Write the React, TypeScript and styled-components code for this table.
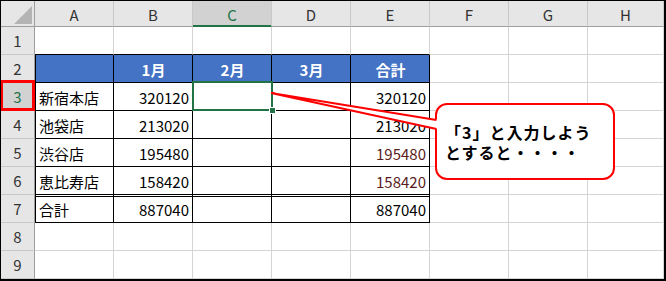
import React from 'react';
import styled, { createGlobalStyle, css } from 'styled-components';

const GlobalStyle = createGlobalStyle`
  html, body { margin: 0; padding: 0; background: #fff; }
  body { font-family: "Noto Sans CJK JP", "Noto Sans", sans-serif; }
`;

const FONT = `"Noto Sans CJK JP", "Noto Sans", sans-serif`;
const GREEN = '#217346';

const Frame = styled.div`
  position: relative;
  width: 666px;
  height: 281px;
  box-sizing: border-box;
  border-style: solid;
  border-color: #000;
  border-width: 1px 2px 2px 1px;
  overflow: hidden;
  background: #fff;
`;

const Sheet = styled.div`
  display: grid;
  grid-template-columns: 34px repeat(7, 79px) 76px;
  grid-template-rows: 26px repeat(9, 28px);
  font-family: ${FONT};
  font-size: 15px;
  color: #000;
`;

const Corner = styled.div`
  position: relative;
  box-sizing: border-box;
  background: #e6e6e6;
  border-right: 1px solid #9e9e9e;
  border-bottom: 1px solid #9e9e9e;

  &::after {
    content: '';
    position: absolute;
    right: 2px;
    bottom: 2px;
    width: 18px;
    height: 18px;
    background: #b4b4b4;
    clip-path: polygon(100% 0, 100% 100%, 0 100%);
  }
`;

const ColHeader = styled.div<{ $active?: boolean }>`
  box-sizing: border-box;
  display: flex;
  align-items: center;
  justify-content: center;
  background: ${(p) => (p.$active ? '#d2d2d2' : '#e6e6e6')};
  color: ${(p) => (p.$active ? GREEN : '#333')};
  border-right: 1px solid #c8c8c8;
  border-bottom: 1px solid ${(p) => (p.$active ? GREEN : '#9e9e9e')};
  box-shadow: ${(p) => (p.$active ? `inset 0 -1px 0 ${GREEN}` : 'none')};
  padding-top: 1px;
`;

const RowHeader = styled.div<{ $active?: boolean }>`
  position: relative;
  box-sizing: border-box;
  display: flex;
  align-items: center;
  justify-content: center;
  background: ${(p) => (p.$active ? '#d2d2d2' : '#e6e6e6')};
  color: ${(p) => (p.$active ? GREEN : '#333')};
  border-right: 1px solid #9e9e9e;
  border-bottom: 1px solid #c8c8c8;
`;

/* red marker drawn around an emphasised row number */
const RowMark = styled.span`
  position: absolute;
  left: -1px;
  top: -3px;
  width: 35px;
  height: 31px;
  box-sizing: border-box;
  border: 3px solid #ff0000;
`;

type Kind = 'grid' | 'table' | 'head';

const Cell = styled.div<{
  $kind: Kind;
  $align?: 'left' | 'right' | 'center';
  $edgeLeft?: boolean;
  $edgeBelow?: boolean;
  $double?: boolean;
  $tint?: string;
}>`
  position: relative;
  box-sizing: border-box;
  display: flex;
  align-items: center;
  justify-content: ${(p) =>
    p.$align === 'right' ? 'flex-end' : p.$align === 'center' ? 'center' : 'flex-start'};
  padding: 1px 3px 0 4px;
  white-space: nowrap;
  overflow: visible;
  border-right: 1px solid ${(p) => (p.$kind === 'grid' ? '#d4d4d4' : '#000')};
  border-bottom: 1px solid
    ${(p) => (p.$kind === 'grid' && !p.$edgeBelow ? '#d4d4d4' : '#000')};
  color: ${(p) => p.$tint || '#000'};
  ${(p) =>
    p.$kind === 'head' &&
    css`
      background: #4472c4;
      color: #fff;
      font-weight: 700;
    `}
  ${(p) => {
    const shadows: string[] = [];
    if (p.$edgeLeft) shadows.push('inset 1px 0 0 #000');
    if (p.$double) shadows.push('inset 0 1px 0 #fff', 'inset 0 2px 0 #000');
    return shadows.length ? css`box-shadow: ${shadows.join(', ')};` : '';
  }}
`;

/* active-cell outline with its fill handle */
const Selection = styled.span`
  position: absolute;
  left: -1px;
  top: -2px;
  width: 81px;
  height: 30px;
  box-sizing: border-box;
  border: 2px solid ${GREEN};
  z-index: 2;

  &::after {
    content: '';
    position: absolute;
    right: -5px;
    bottom: -5px;
    width: 5px;
    height: 5px;
    background: ${GREEN};
    border: 1px solid #fff;
  }
`;

const Callout = styled.div`
  position: absolute;
  left: 434px;
  top: 102px;
  width: 180px;
  height: 77px;
  box-sizing: border-box;
  border: 2px solid #ff0000;
  border-radius: 12px;
  background: #fff;
  display: flex;
  align-items: center;
  padding: 0 0 0 8px;
  z-index: 3;
`;

const CalloutText = styled.p`
  margin: 0;
  font-family: ${FONT};
  font-size: 16px;
  letter-spacing: 1px;
  font-weight: 700;
  line-height: 20px;
  color: #000;
  white-space: pre;
`;

const Tail = styled.svg`
  position: absolute;
  left: -1px;
  top: -1px;
  width: 666px;
  height: 281px;
  pointer-events: none;
  z-index: 4;
`;

const COLS = ['A', 'B', 'C', 'D', 'E', 'F', 'G', 'H'];

const rows: (string[] | null)[] = [
  null,
  ['', '1月', '2月', '3月', '合計'],
  ['新宿本店', '320120', '', '', '320120'],
  ['池袋店', '213020', '', '', '213020'],
  ['渋谷店', '195480', '', '', '195480'],
  ['恵比寿店', '158420', '', '', '158420'],
  ['合計', '887040', '', '', '887040'],
  null,
  null,
];

export default function App() {
  return (
    <>
      <GlobalStyle />
      <Frame>
        <Sheet>
          <Corner />
          {COLS.map((c) => (
            <ColHeader key={c} $active={c === 'C'}>
              {c}
            </ColHeader>
          ))}
          {rows.map((row, ri) => {
            const rowNo = ri + 1;
            return (
              <React.Fragment key={rowNo}>
                <RowHeader $active={rowNo === 3}>
                  {rowNo}
                  {rowNo === 3 && <RowMark />}
                </RowHeader>
                {COLS.map((c, ci) => {
                  const inTable = row !== null && ci < 5;
                  const kind: Kind = !inTable ? 'grid' : rowNo === 2 ? 'head' : 'table';
                  const text = inTable ? row![ci] : '';
                  const align = rowNo === 2 ? 'center' : ci === 0 ? 'left' : 'right';
                  const tint =
                    ci === 4 && (rowNo === 5 || rowNo === 6) ? '#5a1c1c' : undefined;
                  return (
                    <Cell
                      key={c}
                      $kind={kind}
                      $align={align}
                      $edgeLeft={inTable && ci === 0}
                      $edgeBelow={rowNo === 1 && ci < 5}
                      $double={rowNo === 7 && ci < 5}
                      $tint={tint}
                    >
                      {text}
                      {rowNo === 3 && c === 'C' && <Selection />}
                    </Cell>
                  );
                })}
              </React.Fragment>
            );
          })}
        </Sheet>

        <Callout>
          <CalloutText>{'「3」と入力しよう\nとすると・・・・'}</CalloutText>
        </Callout>
        <Tail viewBox="0 0 666 281">
          <polygon points="271,93 438.5,119.4 438.5,129.6" fill="#fff" />
          <path
            d="M271 93 L436.5 120 M271 93 L436.5 129"
            stroke="#ff0000"
            strokeWidth="2"
            fill="none"
          />
        </Tail>
      </Frame>
    </>
  );
}
